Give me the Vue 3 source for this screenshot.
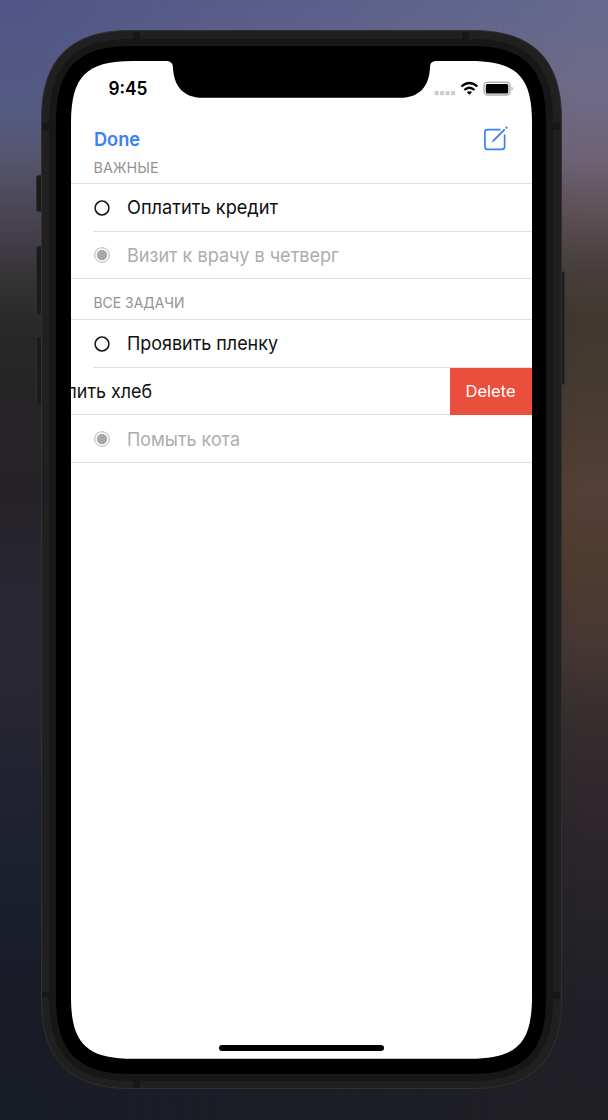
<script setup>
const corner = (x0, y0, x1, y1, e, c) =>
  `M${x0} ${y0 + e}C${x0} ${y0 + c} ${x0 + c} ${y0} ${x0 + e} ${y0}` +
  `L${x1 - e} ${y0}C${x1 - c} ${y0} ${x1} ${y0 + c} ${x1} ${y0 + e}` +
  `L${x1} ${y1 - e}C${x1} ${y1 - c} ${x1 - c} ${y1} ${x1 - e} ${y1}` +
  `L${x0 + e} ${y1}C${x0 + c} ${y1} ${x0} ${y1 - c} ${x0} ${y1 - e}Z`

const body = corner(41.5, 30.5, 561.5, 1088.5, 88, 29)
const rim = corner(49, 39, 553, 1081, 81, 25.5)
const bezel = corner(56, 46, 546, 1074, 75, 22)
const glass = corner(71, 61, 532, 1058.8, 62, 15.3)

const sections = [
  {
    title: 'ВАЖНЫЕ',
    tasks: [
      { text: 'Оплатить кредит', width: 151, done: false },
      { text: 'Визит к врачу в четверг', width: 212, done: true },
    ],
  },
  {
    title: 'ВСЕ ЗАДАЧИ',
    tasks: [
      { text: 'Проявить пленку', width: 151, done: false },
      { text: 'Купить хлеб', width: 107, done: false, swiped: true },
      { text: 'Помыть кота', width: 113, done: true },
    ],
  },
]
</script>

<template>
  <main class="stage">
    <svg class="device" viewBox="0 0 608 1120" width="608" height="1120">
      <g fill="#1b1b1b" stroke="#2d2d2d">
        <rect x="36.500" y="175.500" width="8" height="36" rx="2" />
        <rect x="36.500" y="246.500" width="8" height="68" rx="2" />
        <rect x="36.500" y="336.500" width="8" height="69" rx="2" />
        <rect x="557" y="271.500" width="7.500" height="113" rx="2" />
      </g>
      <path :d="body" fill="#202020" stroke="#303030" />
      <g fill="#171717">
        <rect x="133" y="32" width="7" height="8" />
        <rect x="462" y="32" width="7" height="8" />
        <rect x="133" y="1080" width="7" height="8" />
        <rect x="42" y="123" width="8" height="7" />
        <rect x="552" y="123" width="8" height="7" />
        <rect x="42" y="992" width="8" height="5" />
        <rect x="552" y="992" width="8" height="7" />
      </g>
      <path :d="rim" fill="#171717" />
      <path :d="bezel" fill="#000" />
      <path :d="glass" fill="#fff" />
      <path d="M165 60.500V61C170 61 173 62.500 173 68C174 86 183 97.800 203 97.800H400C420 97.800 429 86 430 68C430 62.500 432 61 438 61V60.500Z" fill="#000" />
    </svg>

    <section class="screen">
      <header class="status">
        <svg class="clock" width="42" height="22"><text x="0.500" y="17" textLength="39" lengthAdjust="spacingAndGlyphs">9:45</text></svg>
        <svg class="indicators" width="82" height="18" viewBox="432 80 82 18">
          <g fill="#cdcdcd">
            <rect x="434.500" y="91" width="4.200" height="4.200" rx="1" />
            <rect x="440" y="91" width="4.200" height="4.200" rx="1" />
            <rect x="445.500" y="91" width="4.200" height="4.200" rx="1" />
            <rect x="451" y="91" width="4.200" height="4.200" rx="1" />
          </g>
          <g fill="none" stroke="#000" stroke-width="2.300">
            <path d="M461.400 86.500Q469.400 79.400 477.400 86.500" />
            <path d="M464.300 90Q469.400 85.600 474.500 90" />
          </g>
          <path d="M469.400 94.700L466.700 92.100Q469.400 90.200 472.100 92.100Z" />
          <rect x="484" y="82.300" width="26" height="12.700" rx="3.500" fill="#fff" stroke="#b0b0b0" stroke-width="1.400" />
          <rect x="485.800" y="84" width="22.500" height="9.500" rx="1.500" />
          <path d="M511.500 86.500Q514.300 88.600 511.500 90.800Z" fill="#aaa" />
        </svg>
      </header>

      <nav class="toolbar">
        <svg class="done" width="50" height="26"><text x="0" y="20" textLength="46" lengthAdjust="spacingAndGlyphs">Done</text></svg>
        <svg class="compose" width="26" height="28" viewBox="483 125 26 28" fill="none" stroke="#3a80f6" stroke-width="1.700">
          <path d="M500.500 129.700H487.500Q484.900 129.700 484.900 132.300V146.800Q484.900 149.400 487.500 149.400H502Q504.600 149.400 504.600 146.800V134.500" />
          <path d="M492.300 141.900L493.300 139.900L504.200 129.100L505 129.900L494.300 140.800Z" fill="#3a80f6" stroke-width=".8" />
          <path d="M505.800 128.300L507.200 127" stroke-width="2" />
        </svg>
      </nav>

      <section v-for="(section, i) in sections" :key="section.title">
        <h2 :class="['heading', { later: i === 1 }]">
          <svg width="110" height="22"><text x="0.500" y="15.500" :textLength="i ? 91 : 65" lengthAdjust="spacingAndGlyphs">{{ section.title }}</text></svg>
        </h2>
        <ul class="tasks">
          <li v-for="task in section.tasks" :key="task.text" :class="['task', { finished: task.done, swiped: task.swiped }]">
            <template v-if="task.swiped">
              <svg class="pulled" width="120" height="30"><text x="-26" y="21" :textLength="task.width" lengthAdjust="spacingAndGlyphs">{{ task.text }}</text></svg>
              <button class="delete"><svg width="54" height="24"><text x="1.500" y="18" textLength="50" lengthAdjust="spacingAndGlyphs">Delete</text></svg></button>
            </template>
            <template v-else>
              <svg class="mark" width="18" height="18" viewBox="0 0 18 18">
                <template v-if="task.done">
                  <circle cx="9" cy="9" r="7.300" fill="none" stroke="#b5b5b5" />
                  <circle cx="9" cy="9" r="5.200" fill="#a8a8a8" />
                </template>
                <circle v-else cx="9" cy="9" r="6.900" fill="none" stroke="#111" stroke-width="1.500" />
              </svg>
              <svg class="label" width="230" height="30"><text x="1" :y="task.done ? 21.5 : 21" :textLength="task.width" lengthAdjust="spacingAndGlyphs">{{ task.text }}</text></svg>
            </template>
          </li>
        </ul>
      </section>
      <div class="home"></div>
    </section>
  </main>
</template>

<style>
body { margin: 0; }
</style>

<style scoped>
.stage {
  position: relative;
  box-sizing: border-box;
  width: 608px;
  height: 1120px;
  padding: 61px 76px 61px 71px;
  overflow: hidden;
  font-family: Inter, "Liberation Sans", sans-serif;
  background: linear-gradient(180deg, #65698e 0, #6e6b87 90px, #6e6275 160px, #594c50 225px, #483f3e 265px, #40382f 320px, #473b31 400px, #533f35 490px, #4e3b30 570px, #463833 640px, #352c2e 730px, #2c262b 830px, #242326 930px, #201f28 1020px, #202024 1120px);
}
.stage::before {
  position: absolute;
  inset: 0;
  content: "";
  background: linear-gradient(180deg, #525587 0, #545b82 110px, #56556e 160px, #48424f 225px, #363436 275px, #282828 330px, #262426 400px, #252327 500px, #292734 620px, #282631 690px, #202231 800px, #1b1f2c 900px, #191c27 1000px, #191d27 1120px);
  mask-image: linear-gradient(90deg, #000 5%, transparent 95%);
}
.device { position: absolute; inset: 0; }
.screen { position: relative; display: flex; flex-direction: column; height: 998px; overflow: hidden; }
svg { display: block; flex: none; }
.status { display: flex; justify-content: space-between; padding: 17px 18px 0 37px; height: 22px; }
.clock { font-size: 18px; font-weight: 600; }
.indicators { margin-top: 2px; }
.toolbar { display: flex; justify-content: space-between; height: 28px; padding: 25px 23px 0 22.500px; }
.done { margin-top: 1px; font-size: 19px; font-weight: 600; fill: #3a80f6; }
.heading { box-sizing: border-box; height: 31px; margin: 0; padding: 4px 0 0 22px; border-bottom: 1px solid #dedede; font-size: 14.500px; font-weight: 400; fill: #929292; }
.heading.later { height: 40.500px; padding-top: 12.500px; }
.tasks { margin: 0; padding: 0; list-style: none; border-bottom: 1px solid #dedede; }
.task { position: relative; display: flex; align-items: center; box-sizing: border-box; height: 47.700px; padding-left: 22px; font-size: 19px; fill: #111; }
.task:last-child { height: 46.800px; }
.task + .task::before { position: absolute; z-index: 1; top: -1px; left: 22px; right: 0; height: 1px; background: #dedede; content: ""; }
.task.swiped + .task::before { left: 0; right: 82px; }
.label { margin-left: 15px; }
.task.finished { fill: #adadad; }
.task.swiped { justify-content: space-between; padding-left: 0; }
.delete { box-sizing: border-box; display: flex; align-items: center; width: 82.500px; height: 47.700px; margin-top: -1.400px; padding: 0 0 0 14px; border: 0; background: #ea4e3d; font: 16.500px Inter, sans-serif; fill: #fff; }
.home { width: 165px; height: 5.500px; margin: auto auto 8.500px 148px; border-radius: 3px; background: #000; }
</style>
